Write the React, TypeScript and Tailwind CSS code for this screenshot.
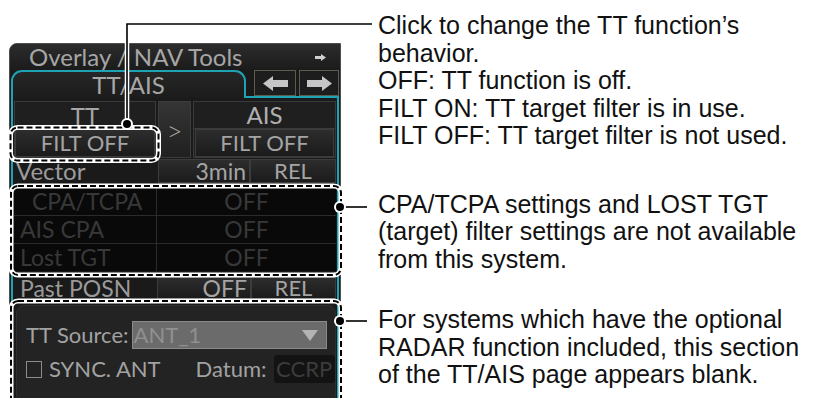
import React from "react";

const cyan = "border-[#1ea3b4]";

function Cell({ className = "", children }: { className?: string; children?: React.ReactNode }) {
  return (
    <div
      className={
        "border border-[#3c3c3c] bg-gradient-to-b from-[#2d2d2d] to-[#1b1b1b] text-[#a4a4a4] leading-none flex items-center " +
        className
      }
    >
      {children}
    </div>
  );
}

function Panel() {
  return (
    <div
      className="ml-[9px] mt-[43px] w-[332px] h-[362px] shrink-0 flex flex-col border border-[#4e4e4e] rounded-tl-[8px] bg-[#1a1a1a] overflow-hidden"
      style={{ fontFamily: "Lato, 'Liberation Sans', sans-serif" }}
    >
      {/* title */}
      <div className="h-[26px] flex items-center justify-between pl-[19px] pr-[14px] bg-gradient-to-b from-[#2c2c2c] to-[#1b1b1b]">
        <span className="text-[24px] leading-none text-[#a6a6a6]">Overlay / NAV Tools</span>
        <svg width="11" height="7" viewBox="0 0 11 7">
          <path d="M11 3.5 L6 0 V2 H0 V5 H6 V7 Z" fill="#cfcfcf" />
        </svg>
      </div>
      {/* tab row */}
      <div className="h-[28px] flex items-end px-[1px]">
        <div
          className={
            "w-[235px] h-full border-2 border-b-0 " +
            cyan +
            " rounded-t-[11px] bg-gradient-to-b from-[#262626] to-[#1c1c1c] flex items-center justify-center text-[24px] leading-none text-[#a6a6a6]"
          }
        >
          TT/AIS
        </div>
        <div className={"flex-1 h-full border-b-2 " + cyan + " flex items-start justify-end gap-[3px]"}>
          <div className="w-[42px] h-[26px] border border-[#5d5c4e] bg-[#1d1d1d] flex items-center justify-center">
            <svg width="25" height="15" viewBox="0 0 25 15">
              <path d="M0 7.5 L10 0 V4 H25 V11 H10 V15 Z" fill="#c6c6c6" />
            </svg>
          </div>
          <div className="w-[40px] h-[26px] border border-[#5d5c4e] bg-[#1d1d1d] flex items-center justify-center">
            <svg width="25" height="15" viewBox="0 0 25 15">
              <path d="M25 7.5 L15 0 V4 H0 V11 H15 V15 Z" fill="#c6c6c6" />
            </svg>
          </div>
        </div>
      </div>
      {/* content */}
      <div className={"flex-1 mx-[1px] border-x-2 " + cyan + " flex flex-col pt-[3px] px-[1px] text-[23px]"}>
        {/* TT / AIS row */}
        <div className="h-[57px] flex gap-[2px]">
          <div className="w-[142px] flex flex-col border border-[#3a3a3a] bg-[#1f1f1f]">
            <div className="h-[27px] flex items-center justify-center text-[24px] text-[#a6a6a6] leading-none">TT</div>
            <Cell className="flex-1 justify-center text-[22px]">FILT OFF</Cell>
          </div>
          <Cell className="w-[33px] justify-center from-[#353535] to-[#202020] text-[28px] font-light">&gt;</Cell>
          <div className="flex-1 flex flex-col border border-[#3a3a3a] bg-[#1f1f1f]">
            <div className="h-[27px] flex items-center justify-center text-[24px] text-[#b0b0b0] leading-none border-b border-[#3a3a3a]">
              AIS
            </div>
            <Cell className="flex-1 mx-[1px] justify-center text-[22px]">FILT OFF</Cell>
          </div>
        </div>
        {/* Vector */}
        <div className="h-[24px] mt-[1px] flex">
          <div className="w-[144px] pl-[2px] flex items-center text-[24px] text-[#9c9c9c] leading-none">Vector</div>
          <Cell className="w-[92px] justify-end pr-[3px]">3min</Cell>
          <Cell className="flex-1 justify-center text-[22px] text-[#9a9a9a]">REL</Cell>
        </div>
        {/* CPA block */}
        <div className="mt-[5px] h-[83px] bg-[#090909] flex flex-col text-[#383838] leading-none">
          {[
            ["CPA/TCPA", "pl-[18px]"],
            ["AIS CPA", "pl-[6px]"],
            ["Lost TGT", "pl-[6px]"],
          ].map(([label, pl], i) => (
            <div key={label} className={"flex-1 flex " + (i < 2 ? "border-b border-[#2b2b2b]" : "")}>
              <div className={"w-[143px] border-r border-[#2b2b2b] flex items-center " + pl}>{label}</div>
              <div className="flex-1 flex items-center justify-center">OFF</div>
            </div>
          ))}
        </div>
        {/* Past POSN */}
        <div className="h-[22px] mt-[6px] flex">
          <div className="w-[143px] pl-[6px] flex items-center text-[#9a9a9a] leading-none">Past POSN</div>
          <Cell className="w-[94px] justify-end pr-[3px]">OFF</Cell>
          <Cell className="flex-1 justify-center text-[22px] text-[#9a9a9a]">REL</Cell>
        </div>
        {/* bottom section */}
        <div className="mt-[6px] ml-[2px] flex-1 rounded-[8px] bg-[#232323] border border-[#2f2f2f] flex flex-col pt-[15px] pl-[9px] text-[22px] text-[#a2a2a2] leading-none">
          <div className="flex items-center h-[28px]">
            <span>TT Source:</span>
            <div className="ml-[3px] w-[195px] h-[28px] bg-[#6b6b6b] border border-[#8a8a8a] flex items-center justify-between pl-[1px] pr-[8px] text-[#909090]">
              <span>ANT_1</span>
              <svg width="16" height="11" viewBox="0 0 16 11">
                <path d="M0 0 H16 L8 11 Z" fill="#b3b3b3" />
              </svg>
            </div>
          </div>
          <div className="flex items-center h-[28px] mt-[6px]">
            <div className="w-[16px] h-[17px] border border-[#8c8c8c]" />
            <span className="ml-[7px]">SYNC. ANT</span>
            <span className="ml-[35px]">Datum:</span>
            <div className="ml-[7px] w-[61px] h-[28px] rounded-[3px] bg-[#131313] flex items-center justify-center text-[#3c3c3c]">
              CCRP
            </div>
          </div>
        </div>
      </div>
    </div>
  );
}

function Notes() {
  const lines1 = [
    "Click to change the TT function\u2019s",
    "behavior.",
    "OFF: TT function is off.",
    "FILT ON: TT target filter is in use.",
    "FILT OFF: TT target filter is not used.",
  ];
  const lines2 = [
    "CPA/TCPA settings and LOST TGT",
    "(target) filter settings are not available",
    "from this system.",
  ];
  const lines3 = [
    "For systems which have the optional",
    "RADAR function included, this section",
    "of the TT/AIS page appears blank.",
  ];
  return (
    <div
      className="ml-[37px] flex flex-col text-[25px] leading-[27.5px] text-[#111] whitespace-nowrap"
      style={{ fontFamily: "'Liberation Sans', Arial, sans-serif" }}
    >
      <div className="mt-[12px]">
        {lines1.map((l) => (
          <div key={l}>{l}</div>
        ))}
      </div>
      <div className="mt-[41px]">
        {lines2.map((l) => (
          <div key={l}>{l}</div>
        ))}
      </div>
      <div className="mt-[33px]">
        {lines3.map((l) => (
          <div key={l}>{l}</div>
        ))}
      </div>
    </div>
  );
}

function Callouts() {
  const box = (x: number, y: number, w: number, h: number, k: string) => (
    <g key={k}>
      <rect x={x} y={y} width={w} height={h} rx={7} fill="none" stroke="#fff" strokeWidth={5} />
      <rect x={x} y={y} width={w} height={h} rx={7} fill="none" stroke="#000" strokeWidth={2} strokeDasharray="6 3" />
    </g>
  );
  const dot = (cx: number, cy: number) => (
    <g>
      <circle cx={cx} cy={cy} r={6} fill="#fff" />
      <circle cx={cx} cy={cy} r={4} fill="#000" />
    </g>
  );
  return (
    <svg className="absolute left-0 top-0 pointer-events-none" width="832" height="398" viewBox="0 0 832 398">
      {box(10.5, 127.5, 148, 33, "b1")}
      {box(11, 186, 330, 89, "b2")}
      {box(11, 301, 330, 120, "b3")}
      <path d="M127 124 V24 H372" fill="none" stroke="#fff" strokeWidth={4.5} />
      <path d="M127 124 V24 H372" fill="none" stroke="#000" strokeWidth={1.6} />
      {dot(127, 124)}
      <path d="M340 207 H367" fill="none" stroke="#000" strokeWidth={1.6} />
      {dot(340, 207)}
      <path d="M340 321 H367" fill="none" stroke="#000" strokeWidth={1.6} />
      {dot(340, 321)}
    </svg>
  );
}

export default function App() {
  return (
    <div className="relative w-[832px] h-[398px] bg-white overflow-hidden flex items-start">
      <Panel />
      <Notes />
      <Callouts />
    </div>
  );
}
